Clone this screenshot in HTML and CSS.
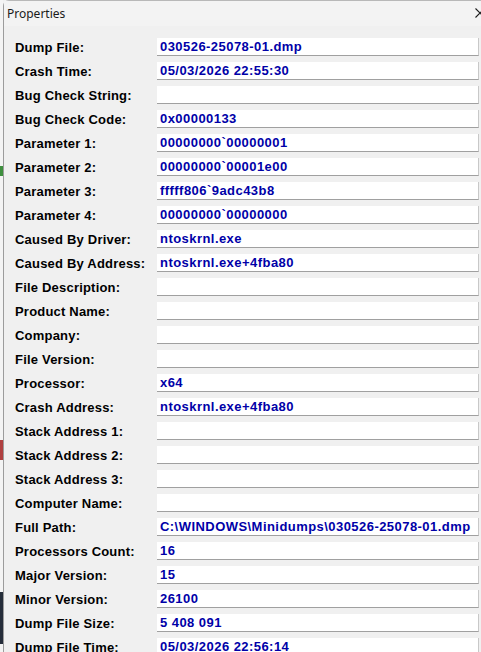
FILE: index.html
```html
<!DOCTYPE html>
<html lang="en">
<head>
  <meta charset="UTF-8" />
  <title>Properties</title>
  <link rel="stylesheet" href="styles.css">
</head>
<body>
  <div class="desktop">
    <!-- strip of the window behind -->
    <div class="behind">
      <span class="mark mark-green"></span>
      <span class="mark mark-red"></span>
      <span class="mark mark-dark"></span>
    </div>

    <div class="window">
      <div class="titlebar">
        <span class="title">Properties</span>
        <svg class="close" width="10" height="10" viewBox="0 0 10 10">
          <path d="M0.5 0.5 L9.5 9.5 M9.5 0.5 L0.5 9.5" stroke="#1a1a1a" stroke-width="1.1" fill="none" />
        </svg>
      </div>

      <div class="props">
        <div class="row"><span class="label">Dump File:</span><span class="field">030526-25078-01.dmp</span></div>
        <div class="row"><span class="label">Crash Time:</span><span class="field">05/03/2026 22:55:30</span></div>
        <div class="row"><span class="label">Bug Check String:</span><span class="field"></span></div>
        <div class="row"><span class="label">Bug Check Code:</span><span class="field">0x00000133</span></div>
        <div class="row"><span class="label">Parameter 1:</span><span class="field">00000000`00000001</span></div>
        <div class="row"><span class="label">Parameter 2:</span><span class="field">00000000`00001e00</span></div>
        <div class="row"><span class="label">Parameter 3:</span><span class="field">fffff806`9adc43b8</span></div>
        <div class="row"><span class="label">Parameter 4:</span><span class="field">00000000`00000000</span></div>
        <div class="row"><span class="label">Caused By Driver:</span><span class="field">ntoskrnl.exe</span></div>
        <div class="row"><span class="label">Caused By Address:</span><span class="field">ntoskrnl.exe+4fba80</span></div>
        <div class="row"><span class="label">File Description:</span><span class="field"></span></div>
        <div class="row"><span class="label">Product Name:</span><span class="field"></span></div>
        <div class="row"><span class="label">Company:</span><span class="field"></span></div>
        <div class="row"><span class="label">File Version:</span><span class="field"></span></div>
        <div class="row"><span class="label">Processor:</span><span class="field">x64</span></div>
        <div class="row"><span class="label">Crash Address:</span><span class="field">ntoskrnl.exe+4fba80</span></div>
        <div class="row"><span class="label">Stack Address 1:</span><span class="field"></span></div>
        <div class="row"><span class="label">Stack Address 2:</span><span class="field"></span></div>
        <div class="row"><span class="label">Stack Address 3:</span><span class="field"></span></div>
        <div class="row"><span class="label">Computer Name:</span><span class="field"></span></div>
        <div class="row"><span class="label">Full Path:</span><span class="field">C:\WINDOWS\Minidumps\030526-25078-01.dmp</span></div>
        <div class="row"><span class="label">Processors Count:</span><span class="field">16</span></div>
        <div class="row"><span class="label">Major Version:</span><span class="field">15</span></div>
        <div class="row"><span class="label">Minor Version:</span><span class="field">26100</span></div>
        <div class="row"><span class="label">Dump File Size:</span><span class="field">5 408 091</span></div>
        <div class="row"><span class="label">Dump File Time:</span><span class="field">05/03/2026 22:56:14</span></div>
      </div>
    </div>
  </div>
</body>
</html>
```

FILE: styles.css
```css
html, body {
  margin: 0;
  padding: 0;
  height: 100%;
  overflow: hidden;
  background-color: #f0f0f0;
}

.desktop {
  display: flex;
  height: 652px;
  overflow: hidden;
}

/* the application window behind the dialog */
.behind {
  position: relative;
  width: 3px;
  flex-shrink: 0;
  background-color: #f4f4f4;
}

.mark {
  position: absolute;
  left: 0;
  width: 3px;
}

.mark-green {
  top: 166px;
  height: 10px;
  background-color: #3f8f3f;
}

.mark-red {
  top: 440px;
  height: 20px;
  background-color: #b04040;
}

.mark-dark {
  top: 592px;
  height: 52px;
  background-color: #252d3a;
}

.window {
  flex: 1;
  min-width: 0;
  border-left: 1px solid #9c9c9c;
  border-top: 1px solid #b8b8b8;
  border-top-left-radius: 6px;
  background-color: #f0f0f0;
  font-family: "Liberation Sans", Arial, sans-serif;
}

.titlebar {
  display: flex;
  align-items: center;
  justify-content: space-between;
  height: 25px;
  padding: 0 0 0 3px;
  background-color: #f3f3f3;
}

.title {
  font-family: "Noto Sans", "Open Sans", sans-serif;
  font-size: 12px;
  color: #1a1a1a;
  margin-top: -1px;
}

.close {
  margin-right: -4px;
  margin-top: -2px;
}

.props {
  padding: 9px 2px 0 11px;
}

.row {
  display: flex;
  align-items: center;
  height: 24px;
}

.label {
  width: 142px;
  flex-shrink: 0;
  font-size: 13px;
  font-weight: bold;
  letter-spacing: 0.2px;
  color: #000;
}

.field {
  flex: 1;
  height: 17px;
  line-height: 17px;
  padding-left: 3px;
  background-color: #fff;
  border-bottom: 1px solid #a0a0a0;
  border-right: 1px solid #c8c8c8;
  font-size: 13px;
  font-weight: bold;
  letter-spacing: 0.45px;
  color: #0000a8;
  white-space: nowrap;
  overflow: hidden;
}
```
